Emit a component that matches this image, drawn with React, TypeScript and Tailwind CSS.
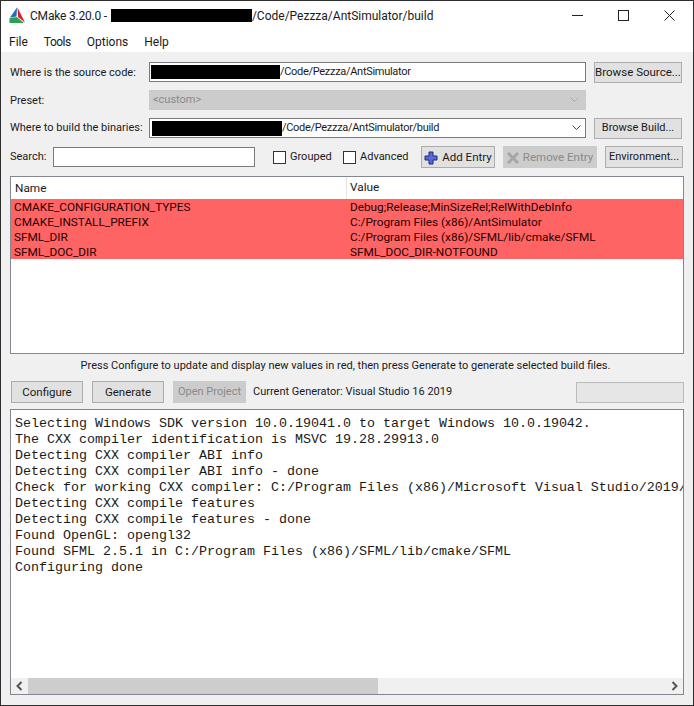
import React from "react";

const Redacted: React.FC<{ className: string }> = ({ className }) => (
  <span className={`block shrink-0 bg-black ${className}`} />
);

const Chevron: React.FC<{ color: string }> = ({ color }) => (
  <svg width="9" height="6" viewBox="0 0 9 6" fill="none" stroke={color} strokeWidth="1">
    <path d="M0.5 0.5 L4.5 4.5 L8.5 0.5" />
  </svg>
);

const Button: React.FC<{ className: string; disabled?: boolean; children: React.ReactNode }> = ({
  className,
  disabled,
  children,
}) => (
  <div
    className={`flex shrink-0 items-center justify-center whitespace-nowrap border pt-[1px] ${
      disabled ? "border-[#cccccc] bg-[#cccccc] text-[#8a8a8a]" : "border-[#adadad] bg-[#e1e1e1] text-[#1a1a1a]"
    } ${className}`}
  >
    {children}
  </div>
);

const Checkbox: React.FC<{ label: string; className: string }> = ({ label, className }) => (
  <div className={`flex items-center gap-[4px] ${className}`}>
    <span className="block h-[13px] w-[13px] border border-[#333333] bg-white" />
    <span className="pt-[1px]">{label}</span>
  </div>
);

const entries = [
  ["CMAKE_CONFIGURATION_TYPES", "Debug;Release;MinSizeRel;RelWithDebInfo"],
  ["CMAKE_INSTALL_PREFIX", "C:/Program Files (x86)/AntSimulator"],
  ["SFML_DIR", "C:/Program Files (x86)/SFML/lib/cmake/SFML"],
  ["SFML_DOC_DIR", "SFML_DOC_DIR-NOTFOUND"],
];

const logLines = [
  "Selecting Windows SDK version 10.0.19041.0 to target Windows 10.0.19042.",
  "The CXX compiler identification is MSVC 19.28.29913.0",
  "Detecting CXX compiler ABI info",
  "Detecting CXX compiler ABI info - done",
  "Check for working CXX compiler: C:/Program Files (x86)/Microsoft Visual Studio/2019/",
  "Detecting CXX compile features",
  "Detecting CXX compile features - done",
  "Found OpenGL: opengl32",
  "Found SFML 2.5.1 in C:/Program Files (x86)/SFML/lib/cmake/SFML",
  "Configuring done",
];

export default function App() {
  return (
    <div className="flex h-[706px] w-[694px] flex-col overflow-hidden border border-[#2e2e2e] bg-[#f0f0f0] font-['Roboto',sans-serif] text-[11px] text-[#1a1a1a]">
      {/* title bar */}
      <div className="flex h-[29px] shrink-0 items-center bg-white pl-[8px] text-[12px]">
        <svg width="17" height="17" viewBox="0 0 17 17" className="shrink-0">
          <path d="M8 0.5 L1 10.5 L7.5 9.5 Z" fill="#1f6fb5" />
          <path d="M8.5 0.5 L16 15.5 L9 10 Z" fill="#d3232c" />
          <path d="M0.5 11 L7.8 10 L15 16 L0.5 16 Z" fill="#2f9e58" />
        </svg>
        <span className="ml-[4px] mr-[4px] whitespace-nowrap tracking-[-0.2px]">CMake 3.20.0 -</span>
        <Redacted className="h-[13px] w-[141px]" />
        <span className="whitespace-nowrap">/Code/Pezzza/AntSimulator/build</span>
        <div className="ml-auto flex items-center">
          <svg width="11" height="11" viewBox="0 0 11 11" stroke="#222222" fill="none" className="mr-[35px]">
            <path d="M0 5.5 H11" />
          </svg>
          <svg width="11" height="11" viewBox="0 0 11 11" stroke="#222222" fill="none" className="mr-[35px]">
            <rect x="0.5" y="0.5" width="10" height="10" />
          </svg>
          <svg width="11" height="11" viewBox="0 0 11 11" stroke="#222222" fill="none" className="mr-[18px]">
            <path d="M0.5 0.5 L10.5 10.5 M10.5 0.5 L0.5 10.5" />
          </svg>
        </div>
      </div>

      {/* menu bar */}
      <div className="flex h-[22px] shrink-0 items-center gap-[16px] bg-white pl-[8px] pt-[2px] text-[12px]">
        <span>File</span>
        <span className="tracking-[-0.5px]">Tools</span>
        <span>Options</span>
        <span>Help</span>
      </div>

      <div className="flex min-h-0 flex-1 flex-col px-[9px] pt-[10px]">
        {/* source */}
        <div className="flex h-[20px] shrink-0 items-center">
          <span className="w-[139px] shrink-0 whitespace-nowrap pt-[2px]">Where is the source code:</span>
          <div className="flex h-[20px] w-[437px] shrink-0 items-center border border-[#7a7a7a] bg-white pl-[1px]">
            <Redacted className="h-[14px] w-[129px]" />
            <span className="pt-[1px] tracking-[-0.3px]">/Code/Pezzza/AntSimulator</span>
          </div>
          <Button className="ml-[8px] h-[21px] w-[88px] text-[11.5px]">Browse Source...</Button>
        </div>

        {/* preset */}
        <div className="mt-[8px] flex h-[20px] shrink-0 items-center">
          <span className="w-[139px] shrink-0 pt-[2px]">Preset:</span>
          <div className="flex h-[20px] w-[437px] shrink-0 items-center justify-between bg-[#cccccc] pl-[4px] pr-[7px] text-[#8a8a8a]">
            <span className="pt-[1px]">&lt;custom&gt;</span>
            <Chevron color="#a8a8a8" />
          </div>
        </div>

        {/* build */}
        <div className="mt-[8px] flex h-[20px] shrink-0 items-center">
          <span className="w-[139px] shrink-0 whitespace-nowrap pt-[1px]">Where to build the binaries:</span>
          <div className="flex h-[20px] w-[437px] shrink-0 items-center border border-[#7a7a7a] bg-white pl-[2px] pr-[4px]">
            <Redacted className="h-[15px] w-[130px]" />
            <span className="pt-[1px] tracking-[-0.3px]">/Code/Pezzza/AntSimulator/build</span>
            <span className="ml-auto">
              <Chevron color="#444444" />
            </span>
          </div>
          <Button className="ml-[8px] h-[21px] w-[88px]">Browse Build...</Button>
        </div>

        {/* search row */}
        <div className="mt-[8px] flex h-[22px] shrink-0 items-center">
          <span className="w-[43px] shrink-0 pt-[1px]">Search:</span>
          <div className="h-[20px] w-[202px] shrink-0 border border-[#7a7a7a] bg-white" />
          <Checkbox label="Grouped" className="ml-[18px] w-[70px]" />
          <Checkbox label="Advanced" className="w-[78px]" />
          <Button className="h-[22px] w-[74px] gap-[4px] border-[#8f8f8f] text-[11.5px]">
            <svg width="14" height="14" viewBox="0 0 14 14" className="shrink-0">
              <path d="M5 1 H9 V5 H13 V9 H9 V13 H5 V9 H1 V5 H5 Z" fill="#5a67d8" stroke="#1f2a7a" strokeWidth="1" />
            </svg>
            <span>Add Entry</span>
          </Button>
          <Button disabled className="ml-[8px] h-[22px] w-[94px] gap-[4px] text-[11.5px]">
            <svg width="12" height="12" viewBox="0 0 12 12" fill="none" stroke="#a6a6a6" strokeWidth="3" className="shrink-0">
              <path d="M1 1 L11 11 M11 1 L1 11" />
            </svg>
            <span>Remove Entry</span>
          </Button>
          <Button className="ml-[8px] h-[22px] w-[78px]">Environment...</Button>
        </div>

        {/* cache table */}
        <div className="mt-[8px] flex h-[178px] w-[674px] shrink-0 flex-col border border-[#828790] bg-white text-[11.8px]">
          <div className="flex h-[22px] shrink-0 items-center">
            <span className="w-[336px] shrink-0 border-r border-[#e5e5e5] pl-[4px] leading-[22px]">Name</span>
            <span className="pl-[3px]">Value</span>
          </div>
          {entries.map(([name, value]) => (
            <div key={name} className="flex h-[15px] shrink-0 items-center bg-[#ff6464] pt-[2px] text-[#2a0000]">
              <span className="w-[336px] shrink-0 pl-[3px]">{name}</span>
              <span className="pl-[3px]">{value}</span>
            </div>
          ))}
        </div>

        {/* hint */}
        <div className="mt-[4px] flex h-[17px] w-[671px] shrink-0 items-center justify-center whitespace-nowrap">
          Press Configure to update and display new values in red, then press Generate to generate selected build files.
        </div>

        {/* actions */}
        <div className="mt-[6px] flex h-[22px] shrink-0 items-center pl-[1px]">
          <Button className="h-[22px] w-[72px] text-[11.5px]">Configure</Button>
          <Button className="ml-[9px] h-[22px] w-[72px] text-[11.5px]">Generate</Button>
          <Button disabled className="ml-[9px] h-[22px] w-[73px]">
            Open Project
          </Button>
          <span className="ml-[7px] whitespace-nowrap pt-[1px]">Current Generator: Visual Studio 16 2019</span>
          <div className="ml-auto h-[21px] w-[108px] border border-[#bcbcbc] bg-[#e6e6e6]" />
        </div>

        {/* output */}
        <div className="mt-[6px] flex h-[286px] w-[674px] shrink-0 flex-col border border-[#828790] bg-white">
          <div className="min-h-0 flex-1 overflow-hidden pl-[4px] pt-[6px] font-['Liberation_Mono',monospace] text-[13.33px] leading-[16px] text-[#1a1a1a]">
            {logLines.map((line) => (
              <div key={line} className="whitespace-pre">
                {line}
              </div>
            ))}
          </div>
          <div className="flex h-[16px] shrink-0 items-center bg-[#f0f0f0]">
            <span className="flex w-[17px] shrink-0 justify-center">
              <svg width="7" height="10" viewBox="0 0 7 10" fill="none" stroke="#555555" strokeWidth="2">
                <path d="M5.5 1 L1.5 5 L5.5 9" />
              </svg>
            </span>
            <div className="h-[16px] w-[350px] shrink-0 bg-[#cdcdcd]" />
            <span className="ml-auto flex w-[17px] shrink-0 justify-center">
              <svg width="7" height="10" viewBox="0 0 7 10" fill="none" stroke="#555555" strokeWidth="2">
                <path d="M1.5 1 L5.5 5 L1.5 9" />
              </svg>
            </span>
          </div>
        </div>
      </div>
    </div>
  );
}
